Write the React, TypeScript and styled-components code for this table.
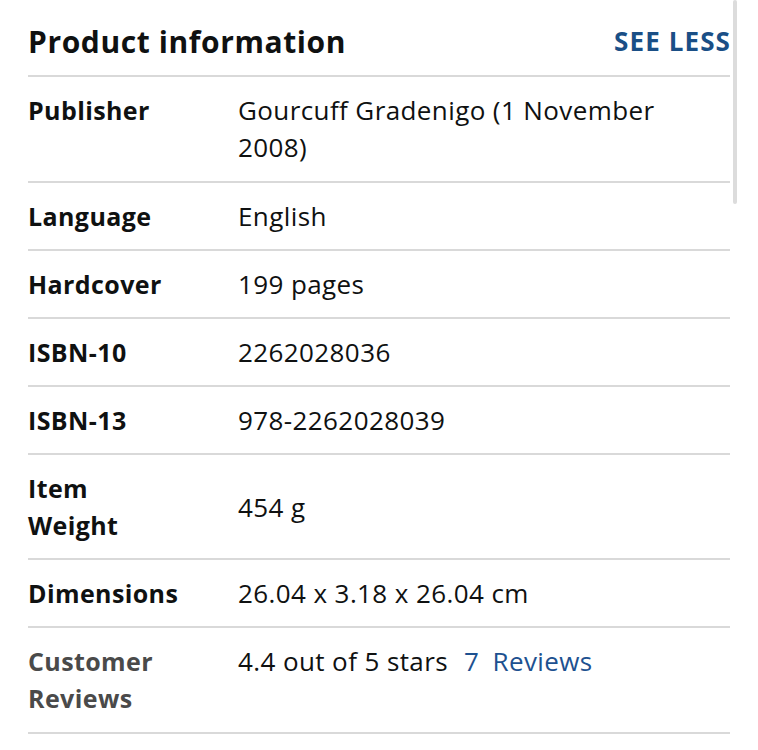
import React from 'react';
import styled, { createGlobalStyle } from 'styled-components';

const GlobalStyle = createGlobalStyle`
  body {
    margin: 0;
    background: #fff;
    font-family: "Open Sans", "Noto Sans", sans-serif;
    color: #0f1111;
  }
`;

const Page = styled.div`
  position: relative;
  width: 758px;
  height: 750px;
  overflow: hidden;
`;

const Container = styled.div`
  padding: 0 28px;
  width: 702px;
`;

const Header = styled.div`
  display: flex;
  align-items: center;
  justify-content: space-between;
  height: 77px;
  padding-top: 7px;
  box-sizing: border-box;
  border-bottom: 2px solid #d9d9d9;
`;

const Title = styled.h2`
  margin: 0;
  font-size: 30px;
  font-weight: 700;
  letter-spacing: 0.6px;
`;

const SeeLess = styled.a`
  font-size: 26px;
  font-weight: 700;
  letter-spacing: 1.1px;
  color: #1a4f86;
  text-decoration: none;
  margin-right: -1px;
`;

const Row = styled.div<{ tall?: boolean }>`
  display: grid;
  grid-template-columns: 210px 1fr;
  align-items: center;
  padding: 15px 0 ${p => (p.tall ? '15px' : '14px')};
  border-bottom: 2px solid #d9d9d9;
  font-size: 26px;
  line-height: 37px;
  letter-spacing: 0.4px;
`;

const Label = styled.div<{ muted?: boolean }>`
  font-weight: 700;
  font-size: 25px;
  color: ${p => (p.muted ? '#4a4a4a' : '#0f1111')};
  align-self: start;
  width: 150px;
`;

const Value = styled.div<{ top?: boolean }>`
  align-self: ${p => (p.top ? 'start' : 'center')};
  max-width: 450px;
`;

const Link = styled.a`
  color: #1d5190;
  text-decoration: none;
  margin-left: 16px;
  word-spacing: 6px;
`;

const Scrollbar = styled.div`
  position: absolute;
  top: 0;
  left: 733px;
  width: 4px;
  height: 204px;
  background: #dcdcdc;
  border-radius: 2px;
`;

const rows = [
  { label: 'Publisher', value: 'Gourcuff Gradenigo (1 November 2008)', top: true },
  { label: 'Language', value: 'English' },
  { label: 'Hardcover', value: '199 pages' },
  { label: 'ISBN-10', value: '2262028036' },
  { label: 'ISBN-13', value: '978-2262028039' },
  { label: 'Item Weight', value: '454 g' },
  { label: 'Dimensions', value: '26.04 x 3.18 x 26.04 cm' },
];

export default function App() {
  return (
    <Page>
      <GlobalStyle />
      <Container>
        <Header>
          <Title>Product information</Title>
          <SeeLess href="#">SEE LESS</SeeLess>
        </Header>
        {rows.map(r => (
          <Row key={r.label} tall={r.top}>
            <Label>{r.label}</Label>
            <Value top={r.top}>{r.value}</Value>
          </Row>
        ))}
        <Row tall>
          <Label muted>Customer Reviews</Label>
          <Value top>
            4.4 out of 5 stars
            <Link href="#">7 Reviews</Link>
          </Value>
        </Row>
      </Container>
      <Scrollbar />
    </Page>
  );
}
